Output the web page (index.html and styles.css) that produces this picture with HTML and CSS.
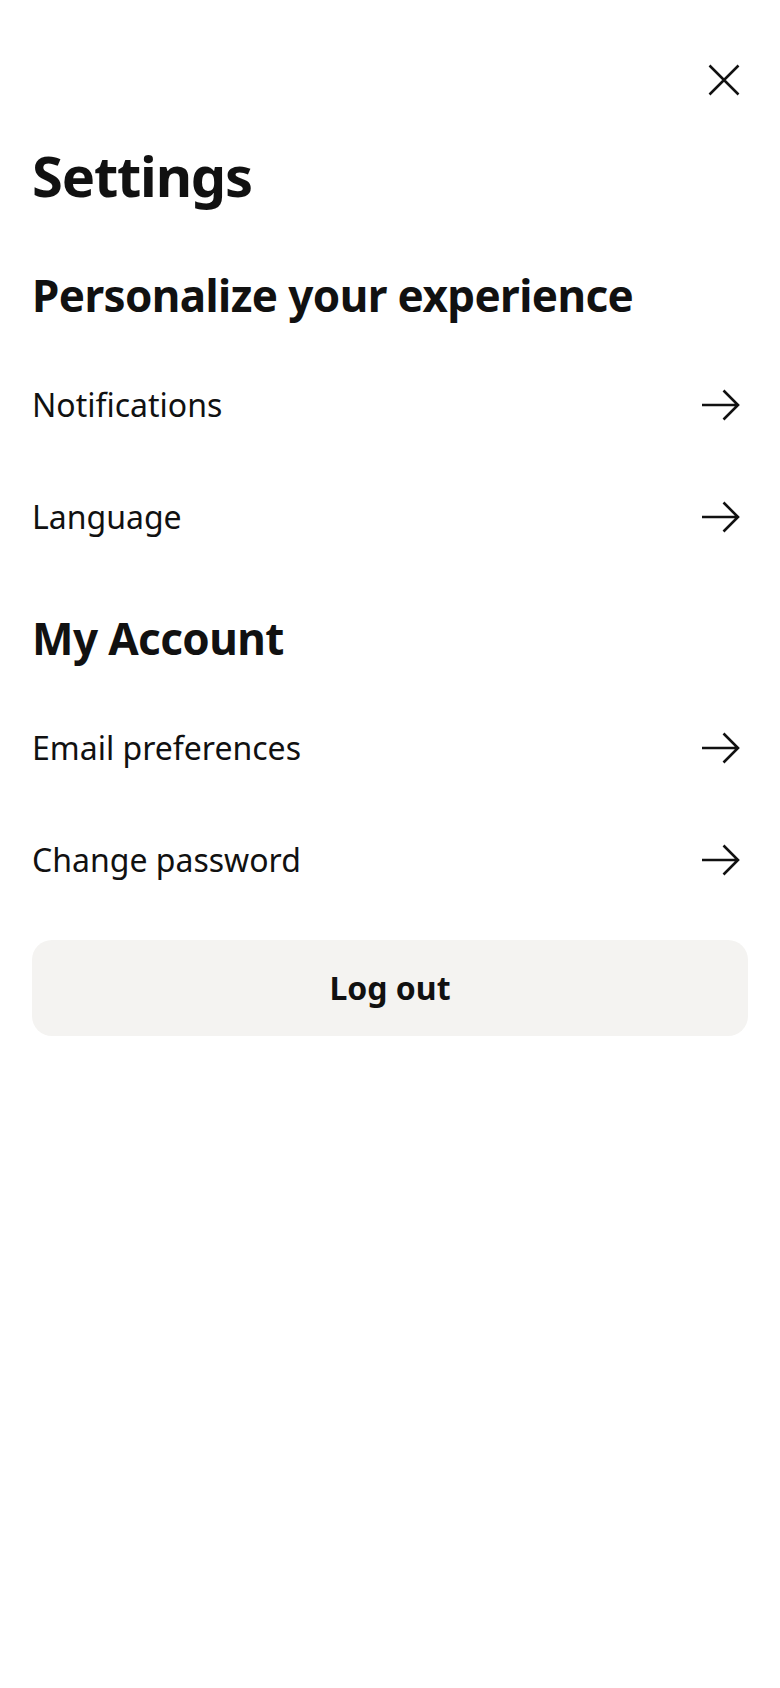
FILE: index.html
```html
<!DOCTYPE html>
<html lang="en">
<head>
<meta charset="utf-8">
<title>Settings</title>
<link rel="stylesheet" href="styles.css">
</head>
<body>
<div class="page">
  <header class="topbar">
    <button class="icon-btn" aria-label="Close">
      <svg width="48" height="48" viewBox="0 0 48 48" fill="none" stroke="#111" stroke-width="2.5" stroke-linecap="butt">
        <path d="M9.5 9.5 L38.5 38.5 M38.5 9.5 L9.5 38.5"/>
      </svg>
    </button>
  </header>
  <h1 class="title">Settings</h1>

  <section class="section section-first">
    <h2 class="section-title">Personalize your experience</h2>
    <ul class="list">
      <li class="row"><span class="row-label">Notifications</span><svg class="arrow" width="48" height="48" viewBox="0 0 48 48" fill="none" stroke="#111" stroke-width="2.6"><path d="M2 24 H38 M23.5 9.5 L38 24 L23.5 38.5"/></svg></li>
      <li class="row"><span class="row-label">Language</span><svg class="arrow" width="48" height="48" viewBox="0 0 48 48" fill="none" stroke="#111" stroke-width="2.6"><path d="M2 24 H38 M23.5 9.5 L38 24 L23.5 38.5"/></svg></li>
    </ul>
  </section>

  <section class="section">
    <h2 class="section-title">My Account</h2>
    <ul class="list">
      <li class="row"><span class="row-label">Email preferences</span><svg class="arrow" width="48" height="48" viewBox="0 0 48 48" fill="none" stroke="#111" stroke-width="2.6"><path d="M2 24 H38 M23.5 9.5 L38 24 L23.5 38.5"/></svg></li>
      <li class="row"><span class="row-label">Change password</span><svg class="arrow" width="48" height="48" viewBox="0 0 48 48" fill="none" stroke="#111" stroke-width="2.6"><path d="M2 24 H38 M23.5 9.5 L38 24 L23.5 38.5"/></svg></li>
    </ul>
  </section>

  <button class="logout">Log out</button>
</div>
</body>
</html>
```

FILE: styles.css
```css
* { box-sizing: border-box; }
html, body { margin: 0; padding: 0; background: #fff; }
body {
  font-family: "Noto Sans", "Open Sans", "Liberation Sans", sans-serif;
  color: #111111;
}
.page {
  padding: 0 32px;
  display: flex;
  flex-direction: column;
}
.topbar {
  display: flex;
  justify-content: flex-end;
  padding-top: 56px;
}
.icon-btn {
  width: 48px;
  height: 48px;
  padding: 0;
  border: 0;
  background: transparent;
  display: flex;
}
.title {
  margin: 37px 0 0;
  font-size: 56px;
  line-height: 68px;
  font-weight: 700;
  letter-spacing: -1.2px;
}
.section { margin-top: 37px; }
.section.section-first { margin-top: 58px; }
.section-title {
  margin: 0 0 26px;
  font-size: 44px;
  line-height: 56px;
  font-weight: 700;
  letter-spacing: -0.6px;
}
.list { list-style: none; margin: 0; padding: 0; }
.row {
  height: 112px;
  display: flex;
  align-items: center;
  justify-content: space-between;
}
.row-label {
  font-size: 32px;
  line-height: 48px;
}
.arrow { display: block; }
.logout {
  margin-top: 24px;
  height: 96px;
  width: 100%;
  border: 0;
  border-radius: 20px;
  background: #f4f3f1;
  color: #111111;
  font-family: "Noto Sans", "Open Sans", "Liberation Sans", sans-serif;
  font-size: 32px;
  line-height: 48px;
  font-weight: 700;
}
```
